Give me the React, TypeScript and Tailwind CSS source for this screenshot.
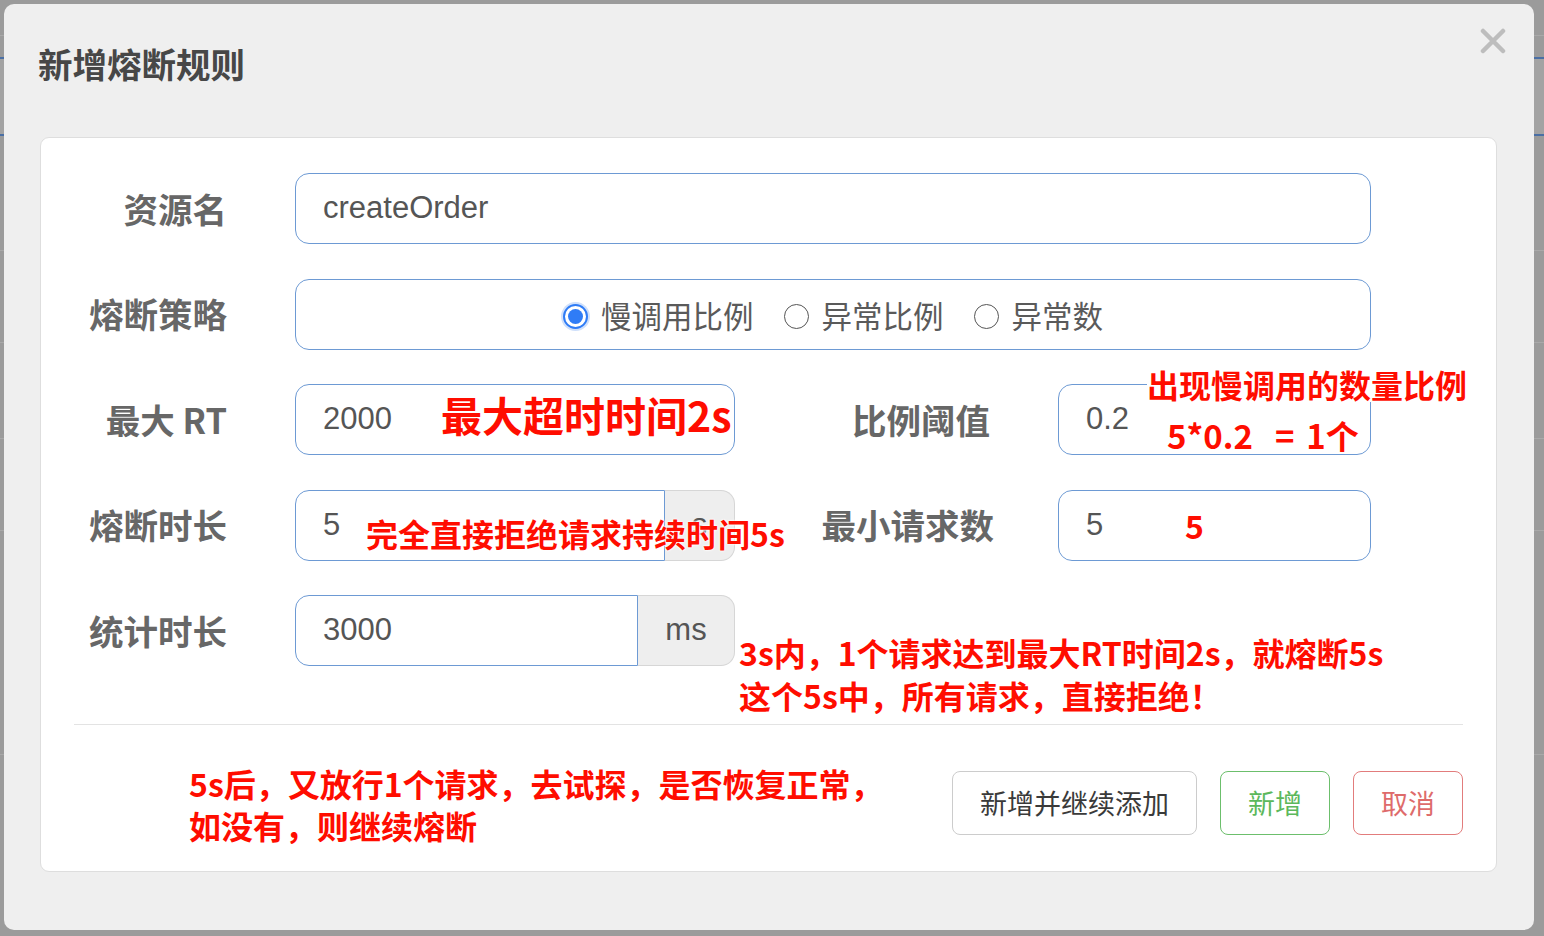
import React from 'react'

const CJK = '"Noto Sans CJK SC", "Noto Sans", sans-serif'
const LATIN = '"Liberation Sans", "Noto Sans CJK SC", sans-serif'

function Label({ text, w = 'w-[221px]', pr = 'pr-[68px]' }: { text: string; w?: string; pr?: string }) {
  return (
    <div className={`${w} ${pr} shrink-0 flex items-center justify-end text-[34.5px] font-bold text-[#676767]`} style={{ fontFamily: CJK }}>
      {text}
    </div>
  )
}

function Field({ value, w, addon, addonW }: { value: string; w: string; addon?: string; addonW?: string }) {
  return (
    <div className="flex h-full">
      <div
        className={`${w} h-full flex items-center pl-[27px] bg-white border-[1.5px] border-[#6d9ad4] text-[31px] text-[#555] ${addon !== undefined ? 'rounded-l-[14px]' : 'rounded-[14px]'}`}
        style={{ fontFamily: LATIN }}
      >
        {value}
      </div>
      {addon !== undefined && (
        <div
          className={`${addonW} h-full flex items-center justify-center bg-[#eeeeee] border border-l-0 border-[#d6d6d6] rounded-r-[14px] text-[31px] text-[#555]`}
          style={{ fontFamily: LATIN }}
        >
          {addon}
        </div>
      )}
    </div>
  )
}

function Radio({ label, checked }: { label: string; checked?: boolean }) {
  return (
    <div className="flex items-center gap-[13px]">
      {checked ? (
        <div className="w-[25px] h-[25px] rounded-full border-[2px] border-[#2f7cf6] p-[3px] bg-white shadow-[0_0_0_2px_#cfe0fb]">
          <div className="w-full h-full rounded-full bg-[#2f7cf6]" />
        </div>
      ) : (
        <div className="w-[25px] h-[25px] rounded-full border-[1.5px] border-[#555] bg-white" />
      )}
      <span className="text-[30.5px] text-[#5a5a5a]" style={{ fontFamily: CJK }}>{label}</span>
    </div>
  )
}

export default function App() {
  return (
    <div className="relative w-[1544px] h-[936px] overflow-hidden bg-[#9b9b9b]">
      {/* page behind the overlay */}
      <div className="flex flex-col">
        <div className="h-[36px] border-b border-[#a9a9a9]" />
        <div className="h-[21px]" />
        <div className="h-[79px] border-y-2 border-[#4a6fa5] bg-[#a3a3a3]" />
        <div className="h-[115px] border-b border-[#a9a9a9]" />
        <div className="h-[92px] border-b border-[#a9a9a9]" />
        <div className="h-[96px] border-b border-[#a9a9a9]" />
        <div className="h-[92px] border-b border-[#a9a9a9]" />
        <div className="h-[224px] border-b border-[#a9a9a9]" />
      </div>

      {/* modal */}
      <div className="absolute left-[4px] top-[4px] w-[1530px] h-[926px] rounded-[10px] bg-[#efefef] flex flex-col">
        <div className="h-[133px] pl-[34px] pt-[42px] relative">
          <div className="text-[34.5px] leading-none font-bold text-[#474747]" style={{ fontFamily: CJK }}>新增熔断规则</div>
          <svg className="absolute right-[28px] top-[24px]" width="26" height="26" viewBox="0 0 26 26">
            <path d="M3 3 L23 23 M23 3 L3 23" stroke="#bdbdbd" strokeWidth="4.5" strokeLinecap="round" />
          </svg>
        </div>

        <div className="ml-[36px] w-[1457px] h-[735px] bg-white rounded-[9px] border border-[#dedede] px-[33px] pt-[35px] pb-[36px] flex flex-col">
          <div className="flex flex-col gap-[34.5px]">
            <div className="flex h-[71px]">
              <Label text="资源名" />
              <Field value="createOrder" w="w-[1076px]" />
            </div>
            <div className="flex h-[71px]">
              <Label text="熔断策略" />
              <div className="w-[1076px] h-full flex items-center justify-center gap-[30px] border-[1.5px] border-[#6d9ad4] rounded-[14px] pt-[4px]">
                <Radio label="慢调用比例" checked />
                <Radio label="异常比例" />
                <Radio label="异常数" />
              </div>
            </div>
            <div className="flex h-[71px]">
              <Label text="最大 RT" />
              <Field value="2000" w="w-[440px]" />
              <Label text="比例阈值" w="w-[323px]" pr="pr-[68px]" />
              <Field value="0.2" w="w-[313px]" />
            </div>
            <div className="flex h-[71px]">
              <Label text="熔断时长" />
              <Field value="5" w="w-[370px]" addon="s" addonW="w-[70px]" />
              <Label text="最小请求数" w="w-[323px]" pr="pr-[64px]" />
              <Field value="5" w="w-[313px]" />
            </div>
            <div className="flex h-[71px]">
              <Label text="统计时长" />
              <Field value="3000" w="w-[343px]" addon="ms" addonW="w-[97px]" />
            </div>
          </div>

          <div className="mt-[58px] border-t border-[#e3e3e3]" />

          <div className="mt-[46px] h-[66px] flex justify-end gap-[23px] text-[27px]" style={{ fontFamily: CJK }}>
            <button className="h-full w-[245px] rounded-[8px] border border-[#cccccc] bg-white text-[#3a3a3a]">新增并继续添加</button>
            <button className="h-full w-[110px] rounded-[8px] border-[1.5px] border-[#6cbf6c] bg-white text-[#5cb85c]">新增</button>
            <button className="h-full w-[110px] rounded-[8px] border-[1.5px] border-[#e27c7c] bg-white text-[#de6b6b]">取消</button>
          </div>
        </div>
      </div>

      {/* red annotations drawn over the dialog */}
      <div className="absolute inset-0 text-[#ff0d00] font-bold pointer-events-none" style={{ fontFamily: CJK }}>
        <div className="absolute left-[441px] top-[394px] text-[41px] leading-none bg-white">最大超时时间2s</div>
        <div className="absolute left-[1147px] top-[366px] text-[32px] leading-[36px] bg-white">出现慢调用的数量比例</div>
        <div className="absolute left-[1167px] top-[417px] text-[33px] leading-[36px] flex">
          <span>5*0.2</span>
          <span className="ml-[22px]">=</span>
          <span className="ml-[12px]">1个</span>
        </div>
        <div
          className="absolute left-[366px] top-[517px] text-[32px] leading-none"
          style={{ textShadow: '0 0 2px #fff, 0 0 2px #fff, 0 0 3px #fff' }}
        >
          完全直接拒绝请求持续时间5s
        </div>
        <div className="absolute left-[1185px] top-[509px] text-[32px] leading-none">5</div>
        <div className="absolute left-[739px] top-[631px] text-[32px] leading-[43px]">
          <div>3s内，1个请求达到最大RT时间2s，就熔断5s</div>
          <div>这个5s中，所有请求，直接拒绝！</div>
        </div>
        <div className="absolute left-[189px] top-[762px] text-[32px] leading-[42px]">
          <div>5s后，又放行1个请求，去试探，是否恢复正常，</div>
          <div>如没有，则继续熔断</div>
        </div>
      </div>
    </div>
  )
}
